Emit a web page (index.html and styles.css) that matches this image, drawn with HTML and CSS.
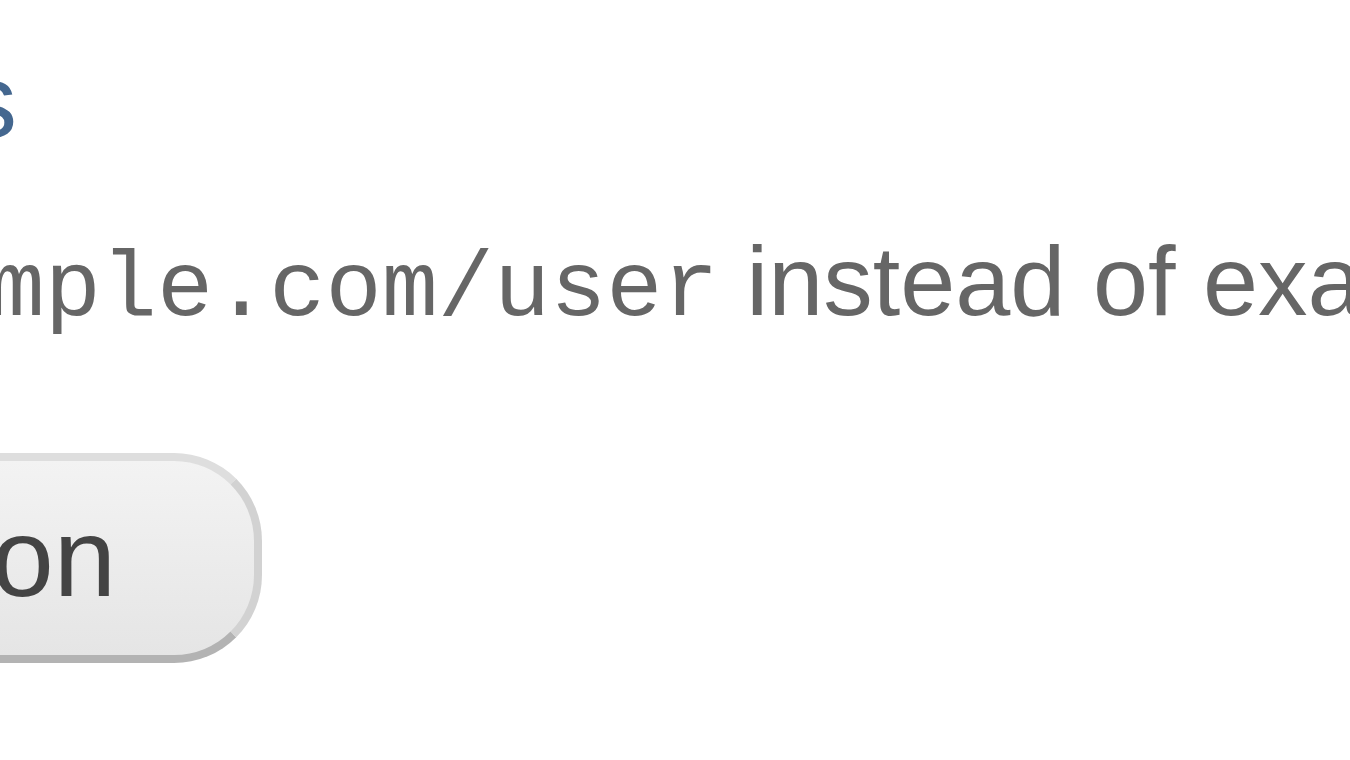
FILE: index.html
```html
<!DOCTYPE html>
<html lang="en">
<head>
<meta charset="utf-8">
<title>Settings</title>
<link rel="stylesheet" href="styles.css">
</head>
<body>
<main class="page">
  <div class="title-row"><h2 class="title">Settings</h2></div>
  <p class="hint"><code class="mono">example.com/user</code> instead of example.com/?user=name</p>
  <div class="actions"><button class="btn" type="button">Save configuration</button></div>
</main>
</body>
</html>
```

FILE: styles.css
```css
html, body {
  margin: 0;
  padding: 0;
  background: #ffffff;
  width: 1350px;
  height: 760px;
  overflow: hidden;
}

.page {
  padding-top: 29px;
}

.title-row {
  display: flex;
  justify-content: flex-end;
  width: 17px;
  height: 144px;
}

.title {
  flex: none;
  margin: 0;
  font: 400 104px/144px "Liberation Sans", Arial, sans-serif;
  color: #44678f;
  white-space: nowrap;
}

.hint {
  margin: 36px 0 0 -180px;
  font: 400 99px/144px "Liberation Sans", Arial, sans-serif;
  color: #666666;
  white-space: nowrap;
}

.mono {
  font-family: "Liberation Mono", "Courier New", monospace;
  font-size: 93.6px;
  line-height: 1;
}

.actions {
  display: flex;
  justify-content: flex-end;
  width: 262px;
  margin-top: 100px;
}

.btn {
  flex: none;
  box-sizing: border-box;
  height: 210px;
  margin: 0;
  padding: 0 138px 0 140px;
  border: 8px solid #d2d2d2;
  border-top-color: #dedede;
  border-bottom-color: #b3b3b3;
  border-radius: 88px;
  background: linear-gradient(#f3f3f3, #e5e5e5);
  font: 400 112px/194px "Liberation Sans", Arial, sans-serif;
  color: #444444;
  white-space: nowrap;
}
```
